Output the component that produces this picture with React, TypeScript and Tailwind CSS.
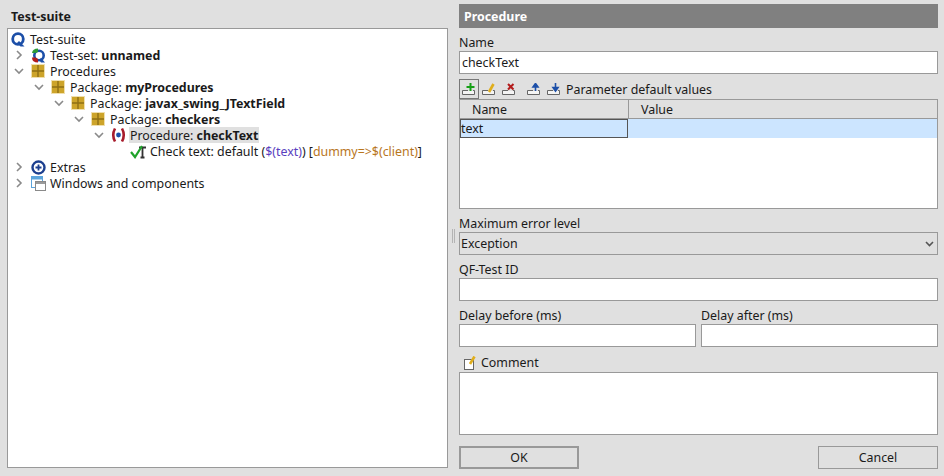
const font = "font-['Noto_Sans','Open_Sans',sans-serif]";

const Chevron = ({ open }: { open: boolean }) => (
  <svg width="10" height="10" viewBox="0 0 10 10" className="shrink-0">
    <path
      d={open ? "M1 3 L5 7 L9 3" : "M3 1 L7 5 L3 9"}
      fill="none"
      stroke="#8a8a8a"
      strokeWidth="1.6"
    />
  </svg>
);

const SuiteIcon = () => (
  <svg width="15" height="15" viewBox="0 0 15 15" className="shrink-0">
    <circle cx="7" cy="7" r="5.300" fill="none" stroke="#1c4fa8" strokeWidth="2.800" />
    <path d="M8 9 L13.500 14.500 H9.500 L6 11 Z" fill="#1c4fa8" />
  </svg>
);

const SetIcon = () => (
  <svg width="15" height="15" viewBox="0 0 15 15" className="shrink-0">
    <circle cx="8" cy="7.500" r="4.700" fill="none" stroke="#1c4fa8" strokeWidth="2.600" />
    <path d="M10 10 L14 14.500 H10 L8 12 Z" fill="#1c4fa8" />
    <path d="M1 5 Q1.500 0.500 7 0.500 L7 4 L4.500 5 Z" fill="#2f9a35" />
    <path d="M1 9.500 Q1 14.500 7 14.500 L7 11 L4.500 9.500 Z" fill="#b31c1c" />
  </svg>
);

const PackageIcon = () => (
  <svg width="14" height="14" viewBox="0 0 14 14" className="shrink-0">
    <rect x="0.500" y="0.500" width="13" height="13" fill="#cda42a" stroke="#f0dfae" />
    <path d="M7 1 V13 M1 7 H13" stroke="#8f6f14" strokeWidth="1.400" />
  </svg>
);

const ProcedureIcon = () => (
  <svg width="15" height="16" viewBox="0 0 15 16" className="shrink-0">
    <path d="M4 1.500 Q0.500 8 4 14.500" fill="none" stroke="#a81c2c" strokeWidth="2.600" />
    <path d="M11 1.500 Q14.500 8 11 14.500" fill="none" stroke="#a81c2c" strokeWidth="2.600" />
    <circle cx="7.500" cy="8" r="2.400" fill="#1c4fa8" />
  </svg>
);

const CheckTextIcon = () => (
  <svg width="17" height="15" viewBox="0 0 17 15" className="shrink-0">
    <path d="M9 3.500 H16 M12.500 3 V13 M10.500 13.500 H14.500" fill="none" stroke="#333" strokeWidth="1.800" />
    <path d="M1 8 L5 13 L12 2" fill="none" stroke="#1fa32a" strokeWidth="2.200" />
  </svg>
);

const ExtrasIcon = () => (
  <svg width="15" height="15" viewBox="0 0 15 15" className="shrink-0">
    <circle cx="7.500" cy="7.500" r="6" fill="#fff" stroke="#1c3f8f" strokeWidth="2.400" />
    <path d="M4.500 7.500 H10.500 M7.500 4.500 V10.500" stroke="#1c3f8f" strokeWidth="1.800" />
  </svg>
);

const WindowsIcon = () => (
  <svg width="15" height="16" viewBox="0 0 15 16" className="shrink-0">
    <rect x="0.500" y="1.500" width="11" height="11" fill="#fff" stroke="#5ba4dc" />
    <rect x="1" y="2" width="10" height="2.500" fill="#5ba4dc" />
    <rect x="4.500" y="6.500" width="10" height="9" fill="#fff" stroke="#8a8a8a" />
    <rect x="5" y="7" width="9" height="2" fill="#9a9a9a" />
  </svg>
);

const ToolIcon = ({ kind }: { kind: string }) => (
  <svg width="14" height="13" viewBox="0 0 14 13" className="shrink-0">
    <rect x="1" y="8" width="11" height="3" fill="#f4f4f4" />
    <path d="M6 7.500 H0.500 V11.500 H12.500 V7.500 H11" fill="none" stroke="#666" />
    {kind === "add" && <path d="M8.500 0 V8 M4.500 4 H12.500" stroke="#16a016" strokeWidth="2" />}
    {kind === "edit" && <path d="M7 9 L11.500 1" stroke="#e0ae1c" strokeWidth="2.600" />}
    {kind === "del" && <path d="M6 1 L11.500 6.500 M11.500 1 L6 6.500" stroke="#b31c1c" strokeWidth="2" />}
    {kind === "up" && <path d="M8.500 8 V3 M6 4 L8.500 0.500 L11 4 Z" stroke="#1c4fa8" strokeWidth="1.600" fill="#1c4fa8" />}
    {kind === "down" && <path d="M8.500 0 V5 M6 4.500 L8.500 8 L11 4.500 Z" stroke="#1c4fa8" strokeWidth="1.600" fill="#1c4fa8" />}
  </svg>
);

const tree = [
  { depth: 0, icon: <SuiteIcon />, label: "Test-suite" },
  { depth: 1, arrow: "closed", icon: <SetIcon />, label: "Test-set: ", bold: "unnamed" },
  { depth: 1, arrow: "open", icon: <PackageIcon />, label: "Procedures" },
  { depth: 2, arrow: "open", icon: <PackageIcon />, label: "Package: ", bold: "myProcedures" },
  { depth: 3, arrow: "open", icon: <PackageIcon />, label: "Package: ", bold: "javax_swing_JTextField" },
  { depth: 4, arrow: "open", icon: <PackageIcon />, label: "Package: ", bold: "checkers" },
  { depth: 5, arrow: "open", icon: <ProcedureIcon />, label: "Procedure: ", bold: "checkText", selected: true },
  { depth: 6, icon: <CheckTextIcon />, label: "check" },
  { depth: 1, arrow: "closed", icon: <ExtrasIcon />, label: "Extras" },
  { depth: 1, arrow: "closed", icon: <WindowsIcon />, label: "Windows and components" },
];

const Field = ({ label, value, className }: { label: string; value?: string; className?: string }) => (
  <div className={className}>
    <div className="h-[18px] leading-[19px]">{label}</div>
    <div className="h-[23px] border border-[#999] bg-white px-[2px] leading-[21px]">{value}</div>
  </div>
);

export default function App() {
  return (
    <div className={`${font} flex h-[476px] w-[944px] overflow-hidden bg-[#e0e0e0] text-[12.4px] text-[#1a1a1a]`}>
      {/* tree side */}
      <div className="flex w-[448px] shrink-0 flex-col pb-[8px] pl-[7px]">
        <div className="h-[28px] pl-[4px] pt-[7px] leading-[20px] font-bold">Test-suite</div>
        <div className="flex-1 border border-[#999] bg-white pt-[2px]">
          {tree.map((node, i) => (
            <div key={i} className="relative flex h-[16px] items-center whitespace-nowrap" style={{ paddingLeft: node.depth * 20 + 2 }}>
              <span className="flex w-[16px] shrink-0 items-center justify-center">{node.icon}</span>
              {node.arrow && (
                <span className="absolute top-[3px]" style={{ left: node.depth * 20 - 14 }}>
                  <Chevron open={node.arrow === "open"} />
                </span>
              )}
              {node.label === "check" ? (
                <span className="ml-[4px] h-[16px] pt-[1px] leading-[15px]">
                  Check text: default (<span className="text-[#5a3fc0]">$(text)</span>) [
                  <span className="text-[#b8761e]">dummy=&gt;$(client)</span>]
                </span>
              ) : (
                <span className={`ml-[3px] h-[16px] px-[1px] pt-[1px] leading-[15px] ${node.selected ? "bg-[#e0e0e0]" : ""}`}>
                  {node.label}
                  {node.bold && <b>{node.bold}</b>}
                </span>
              )}
            </div>
          ))}
        </div>
      </div>

      {/* splitter */}
      <div className="flex w-[11px] shrink-0 items-center justify-center pb-[4px]">
        <div className="h-[14px] w-[3px] border-x border-[#b4b4b4]" />
      </div>

      {/* detail side */}
      <div className="flex w-[479px] shrink-0 flex-col pt-[4px]">
        <div className="h-[24px] bg-[#808080] pl-[5px] leading-[26px] font-bold text-white">Procedure</div>

        <Field label="Name" value="checkText" className="mt-[5px]" />

        <div className="mt-[5px] flex h-[20px] items-center">
          <div className="flex h-[20px] w-[20px] items-center justify-center border border-[#777]">
            <ToolIcon kind="add" />
          </div>
          <div className="ml-[3px] flex items-center gap-[6px]">
            <ToolIcon kind="edit" />
            <ToolIcon kind="del" />
          </div>
          <div className="ml-[11px] flex items-center gap-[6px]">
            <ToolIcon kind="up" />
            <ToolIcon kind="down" />
          </div>
          <span className="ml-[5px] pt-[2px] leading-[20px]">Parameter default values</span>
        </div>

        <div className="h-[110px] border border-[#999] bg-white">
          <div className="flex h-[19px] border-b border-[#999] bg-[#e0e0e0] leading-[20px]">
            <div className="w-[169px] border-r border-[#999] pl-[12px]">Name</div>
            <div className="pl-[12px]">Value</div>
          </div>
          <div className="flex h-[19px] bg-[#cce5ff]">
            <div className="w-[168px] border border-[#555] leading-[18px]">text</div>
          </div>
        </div>

        <div className="mt-[6px]">
          <div className="h-[17px] leading-[17px]">Maximum error level</div>
          <div className="flex h-[23px] items-center justify-between border border-[#999] pr-[3px] pl-[1px]">
            <span className="pt-[2px]">Exception</span>
            <svg width="9" height="6" viewBox="0 0 9 6">
              <path d="M1 1 L4.500 4.500 L8 1" fill="none" stroke="#555" strokeWidth="1.600" />
            </svg>
          </div>
        </div>

        <Field label="QF-Test ID" className="mt-[5px]" />

        <div className="mt-[5px] flex gap-[5px]">
          <Field label="Delay before (ms)" className="flex-1" />
          <Field label="Delay after (ms)" className="flex-1" />
        </div>

        <div className="mt-[6px] flex h-[19px] items-center pl-[5px]">
          <svg width="12" height="14" viewBox="0 0 12 14">
            <rect x="0.500" y="3.500" width="9" height="10" fill="#fff" stroke="#666" />
            <path d="M6 8 L10.500 0.500" stroke="#e0ae1c" strokeWidth="2.600" />
          </svg>
          <span className="ml-[5px] pt-[2px]">Comment</span>
        </div>
        <div className="h-[63px] border border-[#999] bg-white" />

        <div className="mt-[11px] flex justify-between">
          <button className="h-[23px] w-[120px] border-2 border-[#999] pt-[1px]">OK</button>
          <button className="h-[23px] w-[120px] border border-[#999] pt-[2px]">Cancel</button>
        </div>
      </div>
    </div>
  );
}
